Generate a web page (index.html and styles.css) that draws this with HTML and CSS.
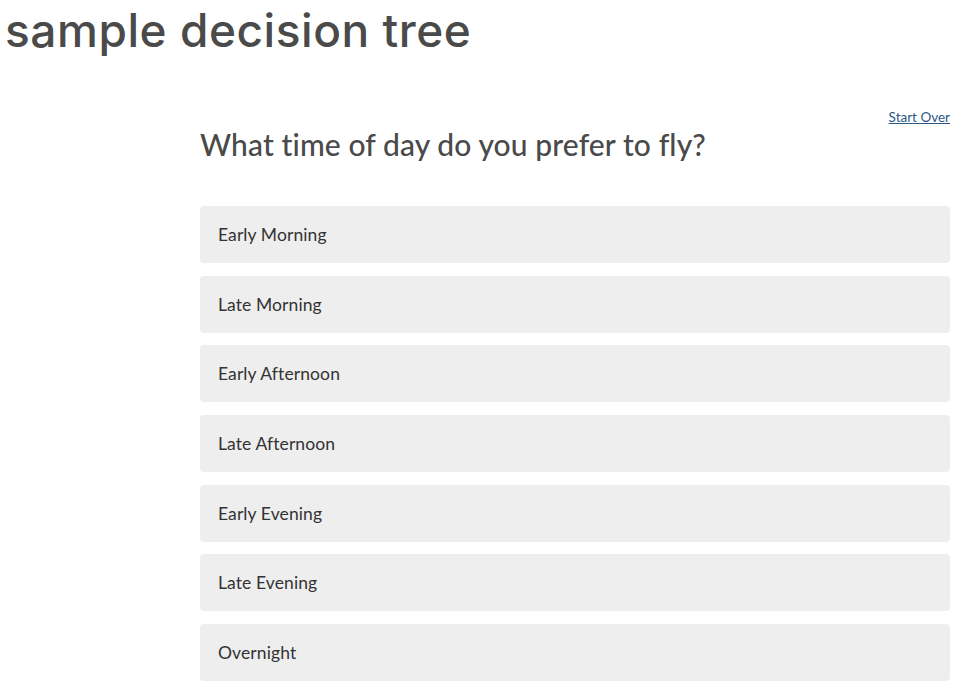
FILE: index.html
```html
<!DOCTYPE html>
<html>
<head>
<meta charset="utf-8">
<link rel="stylesheet" href="styles.css">
</head>
<body>
<h1 class="title">sample decision tree</h1>
<div class="tree">
  <div class="tree-top">
    <a class="start-over" href="#">Start Over</a>
  </div>
  <h2 class="question">What time of day do you prefer to fly?</h2>
  <ul class="options">
    <li class="option">Early Morning</li>
    <li class="option">Late Morning</li>
    <li class="option">Early Afternoon</li>
    <li class="option">Late Afternoon</li>
    <li class="option">Early Evening</li>
    <li class="option">Late Evening</li>
    <li class="option">Overnight</li>
  </ul>
</div>
</body>
</html>
```
FILE: styles.css
```css
html, body {
  margin: 0;
  padding: 0;
  background: #ffffff;
}
body {
  font-family: Lato, "Open Sans", sans-serif;
  color: #4a4a4a;
  overflow: hidden;
}
.title {
  margin: 0;
  padding: 2px 0 0 5px;
  font-family: Inter, Lato, sans-serif;
  font-size: 46px;
  font-weight: 500;
  line-height: 56px;
  color: #4a4a4a;
  letter-spacing: 0.55px;
}
.tree {
  margin: 52px 12px 0 200px;
}
.tree-top {
  display: flex;
  justify-content: flex-end;
  height: 14px;
}
.start-over {
  font-size: 13.5px;
  line-height: 14px;
  color: #2c5687;
  text-decoration: underline;
}
.question {
  margin: 0;
  font-size: 30px;
  font-weight: 500;
  line-height: 40px;
  color: #4a4a4a;
  letter-spacing: 0.1px;
}
.options {
  list-style: none;
  margin: 42px 0 0 0;
  padding: 0;
  display: flex;
  flex-direction: column;
  gap: 12.7px;
}
.option {
  background: #eeeeee;
  border-radius: 4px;
  height: 57px;
  display: flex;
  align-items: center;
  padding-left: 18px;
  font-size: 17.5px;
  color: #333333;
  letter-spacing: 0.1px;
}
```
